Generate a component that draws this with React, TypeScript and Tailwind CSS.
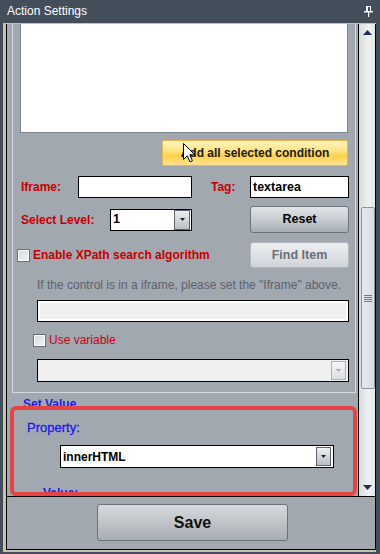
import React from "react";

function DropArrow({ disabled, h = 19, w = 15 }: { disabled?: boolean; h?: number; w?: number }) {
  return (
    <div
      style={{ width: w, height: h }}
      className={
        disabled
          ? "shrink-0 border border-[#aeb2b8] bg-[linear-gradient(to_bottom,#f4f5f6,#dcdfe2)] flex items-center justify-center"
          : "shrink-0 border border-[#5d636b] bg-[linear-gradient(to_bottom,#eef0f2,#b9bec4)] flex items-center justify-center"
      }
    >
      <svg width="5" height="3" viewBox="0 0 5 3">
        <path d="M0 0H5L2.5 3Z" fill={disabled ? "#a3a8ae" : "#1e1e1e"} />
      </svg>
    </div>
  );
}

function Check() {
  return (
    <div className="shrink-0 w-[13px] h-[13px] border border-[#666d76] bg-[linear-gradient(135deg,#d3d6da,#f5f6f7)] shadow-[inset_0_0_0_1px_#ffffff]" />
  );
}

export default function App() {
  return (
    <div className="relative w-[380px] h-[554px] bg-[#434e5a] flex flex-col overflow-hidden font-['Liberation_Sans',Arial,sans-serif]">
      {/* Title bar */}
      <div className="h-[23px] shrink-0 flex items-center justify-between pl-[7px] pr-[7px] pb-[2px] text-white text-[12px]">
        <span>Action Settings</span>
        <svg width="9" height="11" viewBox="0 0 9 11" className="mt-[1px]">
          <rect x="2.5" y="0.5" width="4" height="5" fill="none" stroke="#ffffff" />
          <rect x="2" y="0" width="2" height="6" fill="#ffffff" />
          <rect x="0" y="5" width="9" height="1.5" fill="#ffffff" />
          <rect x="4" y="6" width="1.2" height="5" fill="#ffffff" />
        </svg>
      </div>

      {/* Frame */}
      <div className="flex-1 pl-[3px] pr-[4px] pb-[2px] flex flex-col">
        <div className="flex-1 flex flex-col border-t border-l-[3px] border-b-[2px] border-[#c5c2ab]">
          <div className="flex-1 flex flex-col border-l border-r border-b border-black">
            {/* Viewport */}
            <div className="h-[473px] shrink-0 flex border-b border-black">
              <div className="flex-1 bg-[#a2a8b0] overflow-hidden flex flex-col">
                {/* Group box */}
                <div className="ml-[5px] mr-[2px] border-x border-b border-[#d6d9dd] pl-[7px] pr-[6px] pb-[10px] flex flex-col">
                  <div className="w-[328px] h-[109px] bg-white border-x border-b border-[#7e848c]" />
                  <div className="self-end mr-[1px] mt-[7px] w-[186px] h-[26px] rounded-[2px] border border-[#e9b44c] bg-[linear-gradient(to_bottom,#fff5bd_0%,#ffe27e_45%,#ffd04a_60%,#ffe391_100%)] flex items-center justify-center text-[12px] font-bold text-[#1c1c1c]">
                    Add all selected condition
                  </div>

                  <div className="mt-[10px] h-[22px] flex items-center">
                    <span className="shrink-0 ml-[1px] w-[57px] text-[12px] font-bold text-[#c40000]">Iframe:</span>
                    <div className="shrink-0 w-[114px] h-[22px] border border-black bg-white" />
                    <span className="shrink-0 ml-[19px] w-[39px] text-[12px] font-bold text-[#c40000]">Tag:</span>
                    <div className="shrink-0 w-[99px] h-[22px] border border-black bg-white flex items-center pl-[2px] text-[12.5px] font-bold text-black">
                      textarea
                    </div>
                  </div>

                  <div className="mt-[8px] h-[27px] flex items-center">
                    <span className="shrink-0 ml-[1px] w-[89px] text-[12px] font-bold text-[#c40000]">Select Level:</span>
                    <div className="shrink-0 w-[82px] h-[22px] border border-black bg-white flex items-center justify-between pl-[2px] pr-[1px] text-[12.5px] font-bold text-black">
                      <span>1</span>
                      <DropArrow w={16} h={20} />
                    </div>
                    <div className="shrink-0 ml-auto w-[99px] h-[27px] rounded-[3px] border border-[#6c727b] bg-[linear-gradient(to_bottom,#e2e4e7_0%,#c8ccd1_50%,#a9aeb5_100%)] flex items-center justify-center text-[12.5px] font-bold text-black">
                      Reset
                    </div>
                  </div>

                  <div className="mt-[9px] h-[26px] flex items-center">
                    <div className="-ml-[3px]">
                      <Check />
                    </div>
                    <span className="ml-[3px] text-[12px] font-bold text-[#c40000] whitespace-nowrap">
                      Enable XPath search algorithm
                    </span>
                    <div className="shrink-0 ml-auto w-[99px] h-[26px] rounded-[3px] border border-[#b4b8be] bg-[linear-gradient(to_bottom,#eceef0_0%,#dfe2e5_50%,#d0d3d8_100%)] flex items-center justify-center text-[12.5px] font-bold text-[#6a6f77]">
                      Find Item
                    </div>
                  </div>

                  <div className="mt-[10px] ml-[17px] leading-[14px] text-[12px] text-[#5b626d] whitespace-nowrap">
                    If the control is in a iframe, please set the "Iframe" above.
                  </div>

                  <div className="mt-[8px] ml-[17px] w-[312px] h-[22px] border border-black bg-[#f0f0f0] shadow-[inset_0_0_0_2px_#ffffff]" />

                  <div className="mt-[12px] ml-[13px] h-[13px] flex items-center gap-[3px]">
                    <Check />
                    <span className="text-[12px] text-[#c4001a] leading-[13px]">Use variable</span>
                  </div>

                  <div className="mt-[12px] ml-[17px] w-[312px] h-[23px] border border-black bg-[#f0f0f0] flex items-center justify-end pr-[2px]">
                    <DropArrow disabled />
                  </div>
                </div>

                {/* Set Value section */}
                <div className="mt-[4px] ml-[16px] leading-[14px] text-[12px] font-bold text-[#1a1aee]">Set Value</div>
                <div className="mt-[10px] ml-[20px] leading-[14px] text-[13px] text-[#1a1aee] [-webkit-text-stroke:0.3px_#1a1aee]">Property:</div>
                <div className="mt-[10px] ml-[53px] w-[274px] h-[23px] shrink-0 border border-black bg-white flex items-center justify-between pl-[2px] pr-[2px] text-[12px] text-black">
                  <span className="font-bold">innerHTML</span>
                  <DropArrow />
                </div>
                <div className="mt-[18px] ml-[36px] leading-[14px] text-[12px] font-bold text-[#1a1aee]">Value:</div>
              </div>

              {/* Scrollbar */}
              <div className="w-[17px] shrink-0 border-l border-black bg-[linear-gradient(to_right,#d8dbdf,#eef0f2_60%,#e4e7ea)] flex flex-col">
                <div className="h-[17px] shrink-0 flex items-center justify-center">
                  <svg width="9" height="5" viewBox="0 0 9 5">
                    <path d="M0 5L4.5 0L9 5Z" fill="#1f2d52" />
                  </svg>
                </div>
                <div className="flex-1 flex flex-col">
                  <div className="mt-[166px] ml-[2px] w-[14px] h-[182px] rounded-[2px] border border-[#8793a3] bg-[linear-gradient(to_right,#e6e9ed,#d9dde2)] flex flex-col items-center justify-center gap-[1px]">
                    <div className="w-[8px] h-px bg-[#6f7884]" />
                    <div className="w-[8px] h-px bg-[#6f7884]" />
                    <div className="w-[8px] h-px bg-[#6f7884]" />
                    <div className="w-[8px] h-px bg-[#6f7884]" />
                  </div>
                </div>
                <div className="h-[17px] shrink-0 flex items-center justify-center">
                  <svg width="9" height="5" viewBox="0 0 9 5">
                    <path d="M0 0L4.5 5L9 0Z" fill="#1f2d52" />
                  </svg>
                </div>
              </div>
            </div>

            {/* Bottom panel */}
            <div className="flex-1 bg-[#a2a8b0] pt-[7px] pl-[90px]">
              <div className="w-[191px] h-[37px] rounded-[3px] border border-[#6c727b] bg-[linear-gradient(to_bottom,#d6d9dc_0%,#c0c4c9_50%,#a8adb4_100%)] flex items-center justify-center text-[16px] font-bold text-[#111]">
                Save
              </div>
            </div>
          </div>
        </div>
      </div>

      {/* Red annotation rectangle */}
      <div className="absolute left-[10px] top-[406px] w-[347px] h-[90px] border-[4px] border-[#e64444] rounded-[6px]" />

      {/* Mouse cursor */}
      <svg className="absolute left-[183px] top-[143px]" width="13" height="20" viewBox="0 0 13 20">
        <path d="M0.5 0.5 L0.5 16.5 L4.3 12.8 L7 18.8 L9.4 17.8 L6.8 11.8 L11.8 11.8 Z" fill="#ffffff" stroke="#000000" strokeWidth="1" strokeLinejoin="miter" />
      </svg>
    </div>
  );
}
